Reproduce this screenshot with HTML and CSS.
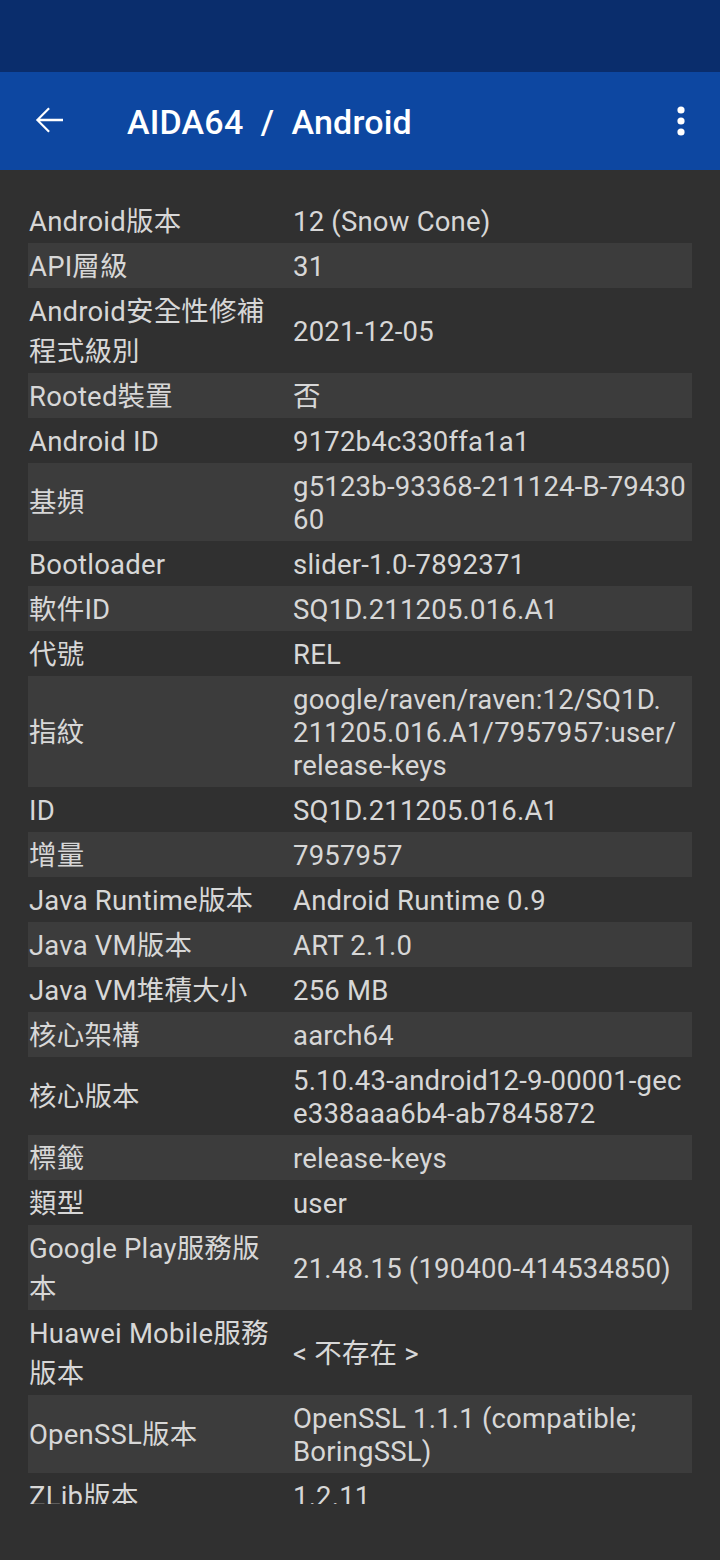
FILE: index.html
```html
<!DOCTYPE html>
<html lang="zh-Hant">
<head>
  <meta charset="UTF-8">
  <meta name="viewport" content="width=device-width, initial-scale=1.0">
  <title>AIDA64 / Android</title>
  <link rel="stylesheet" href="styles.css">
</head>
<body>
  <div class="statusbar"></div>

  <header class="appbar">
    <svg class="back" viewBox="0 0 24 24" width="42" height="42">
      <path d="M20 11.3H6.9l5.6-5.6-.9-.9L4.5 12l7.1 7.2.9-.9-5.6-5.6H20z" fill="#fff"/>
    </svg>
    <h1 class="title">AIDA64&nbsp; / &nbsp;Android</h1>
    <svg class="menu" viewBox="0 0 8 30" width="8" height="30">
      <circle cx="4" cy="4" r="3.6" fill="#fff"/>
      <circle cx="4" cy="15" r="3.6" fill="#fff"/>
      <circle cx="4" cy="26" r="3.6" fill="#fff"/>
    </svg>
  </header>

  <main class="list">
    <div class="row"><div class="key">Android版本</div><div class="val">12 (Snow Cone)</div></div>
    <div class="row"><div class="key">API層級</div><div class="val">31</div></div>
    <div class="row"><div class="key">Android安全性修補<br>程式級別</div><div class="val">2021-12-05</div></div>
    <div class="row"><div class="key">Rooted裝置</div><div class="val">否</div></div>
    <div class="row"><div class="key">Android ID</div><div class="val">9172b4c330ffa1a1</div></div>
    <div class="row"><div class="key">基頻</div><div class="val">g5123b-93368-211124-B-79430<br>60</div></div>
    <div class="row"><div class="key">Bootloader</div><div class="val">slider-1.0-7892371</div></div>
    <div class="row"><div class="key">軟件ID</div><div class="val">SQ1D.211205.016.A1</div></div>
    <div class="row"><div class="key">代號</div><div class="val">REL</div></div>
    <div class="row"><div class="key">指紋</div><div class="val">google/raven/raven:12/SQ1D.<br>211205.016.A1/7957957:user/<br>release-keys</div></div>
    <div class="row"><div class="key">ID</div><div class="val">SQ1D.211205.016.A1</div></div>
    <div class="row"><div class="key">增量</div><div class="val">7957957</div></div>
    <div class="row"><div class="key">Java Runtime版本</div><div class="val">Android Runtime 0.9</div></div>
    <div class="row"><div class="key">Java VM版本</div><div class="val">ART 2.1.0</div></div>
    <div class="row"><div class="key">Java VM堆積大小</div><div class="val">256 MB</div></div>
    <div class="row"><div class="key">核心架構</div><div class="val">aarch64</div></div>
    <div class="row"><div class="key">核心版本</div><div class="val">5.10.43-android12-9-00001-gec<br>e338aaa6b4-ab7845872</div></div>
    <div class="row"><div class="key">標籤</div><div class="val">release-keys</div></div>
    <div class="row"><div class="key">類型</div><div class="val">user</div></div>
    <div class="row"><div class="key">Google Play服務版<br>本</div><div class="val">21.48.15 (190400-414534850)</div></div>
    <div class="row"><div class="key">Huawei Mobile服務<br>版本</div><div class="val">&lt; 不存在 &gt;</div></div>
    <div class="row"><div class="key">OpenSSL版本</div><div class="val">OpenSSL 1.1.1 (compatible;<br>BoringSSL)</div></div>
    <div class="row"><div class="key">ZLib版本</div><div class="val">1.2.11</div></div>
  </main>

  <div class="navspace"></div>
</body>
</html>
```

FILE: styles.css
```css
body {
  margin: 0;
  background-color: #303030;
  font-family: Roboto, "Noto Sans CJK TC", sans-serif;
  color: #d7d7d7;
  width: 720px;
  height: 1560px;
  overflow: hidden;
}
.statusbar {
  height: 72px;
  background-color: #0a2d6c;
}
.appbar {
  height: 98px;
  background-color: #0d47a1;
  display: flex;
  align-items: center;
  padding: 0 35px 0 28px;
  box-sizing: border-box;
}
.back {
  flex: none;
  margin-top: -2px;
}
.title {
  flex: 1;
  margin: 2px 0 0 57px;
  color: #fff;
  font-size: 34px;
  font-weight: 500;
  letter-spacing: 0.2px;
}
.menu {
  flex: none;
}
.list {
  height: 1334px;
  overflow: hidden;
  box-sizing: border-box;
  padding: 28px 28px 0 28px;
}
.row {
  display: flex;
  align-items: center;
  font-size: 27.5px;
  letter-spacing: 0.2px;
  white-space: nowrap;
}
.row:nth-child(even) {
  background-color: #3c3c3c;
}
.key {
  width: 265px;
  flex: none;
  padding: 3.5px 0 1.5px 1px;
  line-height: 40px;
  box-sizing: border-box;
}
.val {
  flex: 1;
  padding: 7px 0 5px 0;
  line-height: 33px;
}
.navspace {
  height: 56px;
}
```
